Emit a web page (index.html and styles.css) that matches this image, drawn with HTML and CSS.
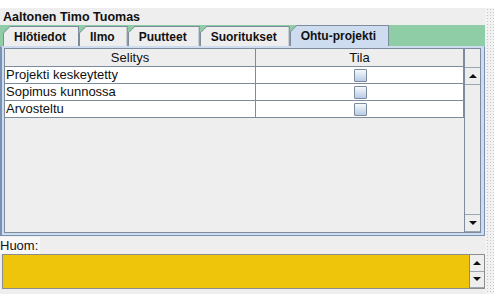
FILE: index.html
```html
<!DOCTYPE html>
<html lang="fi">
<head>
  <meta charset="UTF-8" />
  <title>Opiskelija</title>
  <link rel="stylesheet" href="styles.css">
</head>
<body>
  <div class="screen">
    <div class="window">
      <div class="owner">Aaltonen Timo Tuomas</div>

      <div class="tabs">
        <div class="tab"><span>Hlötiedot</span></div>
        <div class="tab"><span>Ilmo</span></div>
        <div class="tab"><span>Puutteet</span></div>
        <div class="tab"><span>Suoritukset</span></div>
        <div class="tab active"><span>Ohtu-projekti</span></div>
      </div>

      <div class="tab-panel">
        <div class="scroll-pane">
          <div class="table-area">
            <table class="grid">
              <thead>
                <tr><th class="col-desc">Selitys</th><th>Tila</th></tr>
              </thead>
              <tbody>
                <tr><td>Projekti keskeytetty</td><td class="check-cell"><span class="check"></span></td></tr>
                <tr><td>Sopimus kunnossa</td><td class="check-cell"><span class="check"></span></td></tr>
                <tr><td>Arvosteltu</td><td class="check-cell"><span class="check"></span></td></tr>
              </tbody>
            </table>
          </div>
          <div class="vscroll">
            <div class="corner"></div>
            <div class="arrow-btn"><i class="arrow up"></i></div>
            <div class="track"></div>
            <div class="arrow-btn"><i class="arrow down"></i></div>
          </div>
        </div>
      </div>

      <div class="note-label"><span>Huom:</span></div>
      <div class="note">
        <div class="note-text"></div>
        <div class="vscroll small">
          <div class="arrow-btn"><i class="arrow up"></i></div>
          <div class="arrow-btn"><i class="arrow down"></i></div>
        </div>
      </div>
    </div>
  </div>
</body>
</html>
```

FILE: styles.css
```css
body {
  margin: 0;
  font-family: 'Liberation Sans', Arial, sans-serif;
  color: #111;
  overflow: hidden;
}

.screen {
  width: 494px;
  height: 294px;
  background-color: #f2f2f2;
  background-image: radial-gradient(circle, #c6c6c6 0.7px, transparent 1px);
  background-size: 3px 3px;
}

.window {
  margin: 8px 9px 0 0;
  height: 286px;
  background-color: #eeeeee;
  display: flex;
  flex-direction: column;
}

.owner {
  height: 17px;
  padding-left: 3px;
  font-size: 12.5px;
  font-weight: bold;
  line-height: 19px;
}

/* Tabs */
.tabs {
  height: 21px;
  background-color: #8fcda6;
  display: flex;
  align-items: flex-end;
  padding-left: 3px;
}

.tab {
  height: 20px;
  padding: 1px 1px 0 1px;
  box-sizing: border-box;
  background-color: #7d8c9c;
  clip-path: polygon(0 7px, 7px 0, 100% 0, 100% 100%, 0 100%);
}

.tab span {
  display: block;
  height: 19px;
  padding: 0 12px 0 10px;
  background-color: #eeeeee;
  clip-path: polygon(0 6px, 6px 0, 100% 0, 100% 100%, 0 100%);
  font-size: 12px;
  font-weight: bold;
  line-height: 20px;
}

.tab.active {
  height: 21px;
  padding-bottom: 0;
}

.tab.active span {
  height: 20px;
  background-color: #cddcef;
}

/* Tab content */
.tab-panel {
  height: 190px;
  box-sizing: border-box;
  border: 1px solid #7b91b3;
  border-left-width: 2px;
  border-top-color: #cddcef;
  background-color: #cddcef;
  padding: 1px 3px 2px 2px;
  display: flex;
}

.scroll-pane {
  flex: 1;
  display: flex;
  border: 1px solid #7d8c9c;
  background-color: #eeeeee;
}

.table-area {
  flex: 1;
}

.grid {
  width: 100%;
  border-collapse: collapse;
  font-size: 13px;
}

.grid th {
  height: 17px;
  padding: 0;
  font-weight: normal;
  background-color: #eeeeee;
  border-right: 1px solid #7d8c9c;
  border-bottom: 1px solid #7d8c9c;
  line-height: 16px;
}

.grid th.col-desc {
  width: 250px;
}

.grid td {
  height: 16px;
  padding: 0 0 0 1px;
  background-color: #ffffff;
  border-right: 1px solid #7d8c9c;
  border-bottom: 1px solid #7d8c9c;
  line-height: 16px;
  white-space: nowrap;
}

.check-cell {
  text-align: center;
}

.check {
  display: inline-block;
  width: 11px;
  height: 11px;
  margin-top: 2px;
  vertical-align: top;
  border: 1px solid #7d8c9c;
  border-radius: 1px;
  background: linear-gradient(to bottom, #f7f9fc, #b8cce6);
}

/* Scrollbars */
.vscroll {
  width: 15px;
  border-left: 1px solid #7d8c9c;
  display: flex;
  flex-direction: column;
  background-color: #eeeeee;
}

.corner {
  height: 18px;
}

.arrow-btn {
  height: 16px;
  border-top: 1px solid #9aa7b5;
  border-bottom: 1px solid #9aa7b5;
  display: flex;
  align-items: center;
  justify-content: center;
  background-color: #eeeeee;
}

.track {
  flex: 1;
}

.arrow {
  width: 0;
  height: 0;
  border-left: 4px solid transparent;
  border-right: 4px solid transparent;
}

.arrow.up {
  border-bottom: 4px solid #111;
}

.arrow.down {
  border-top: 4px solid #111;
}

/* Note field */
.note-label {
  height: 18px;
  display: flex;
  align-items: center;
}

.note-label span {
  background-color: #f8f8f8;
  padding: 1px 2px 1px 0;
  font-size: 13px;
}

.note {
  height: 35px;
  box-sizing: border-box;
  margin-left: 2px;
  border: 1px solid #8d8d8d;
  display: flex;
}

.note-text {
  flex: 1;
  background-color: #efc50c;
}

.vscroll.small {
  width: 14px;
}

.vscroll.small .arrow-btn {
  flex: 1;
  height: auto;
  border-top: none;
}
```
